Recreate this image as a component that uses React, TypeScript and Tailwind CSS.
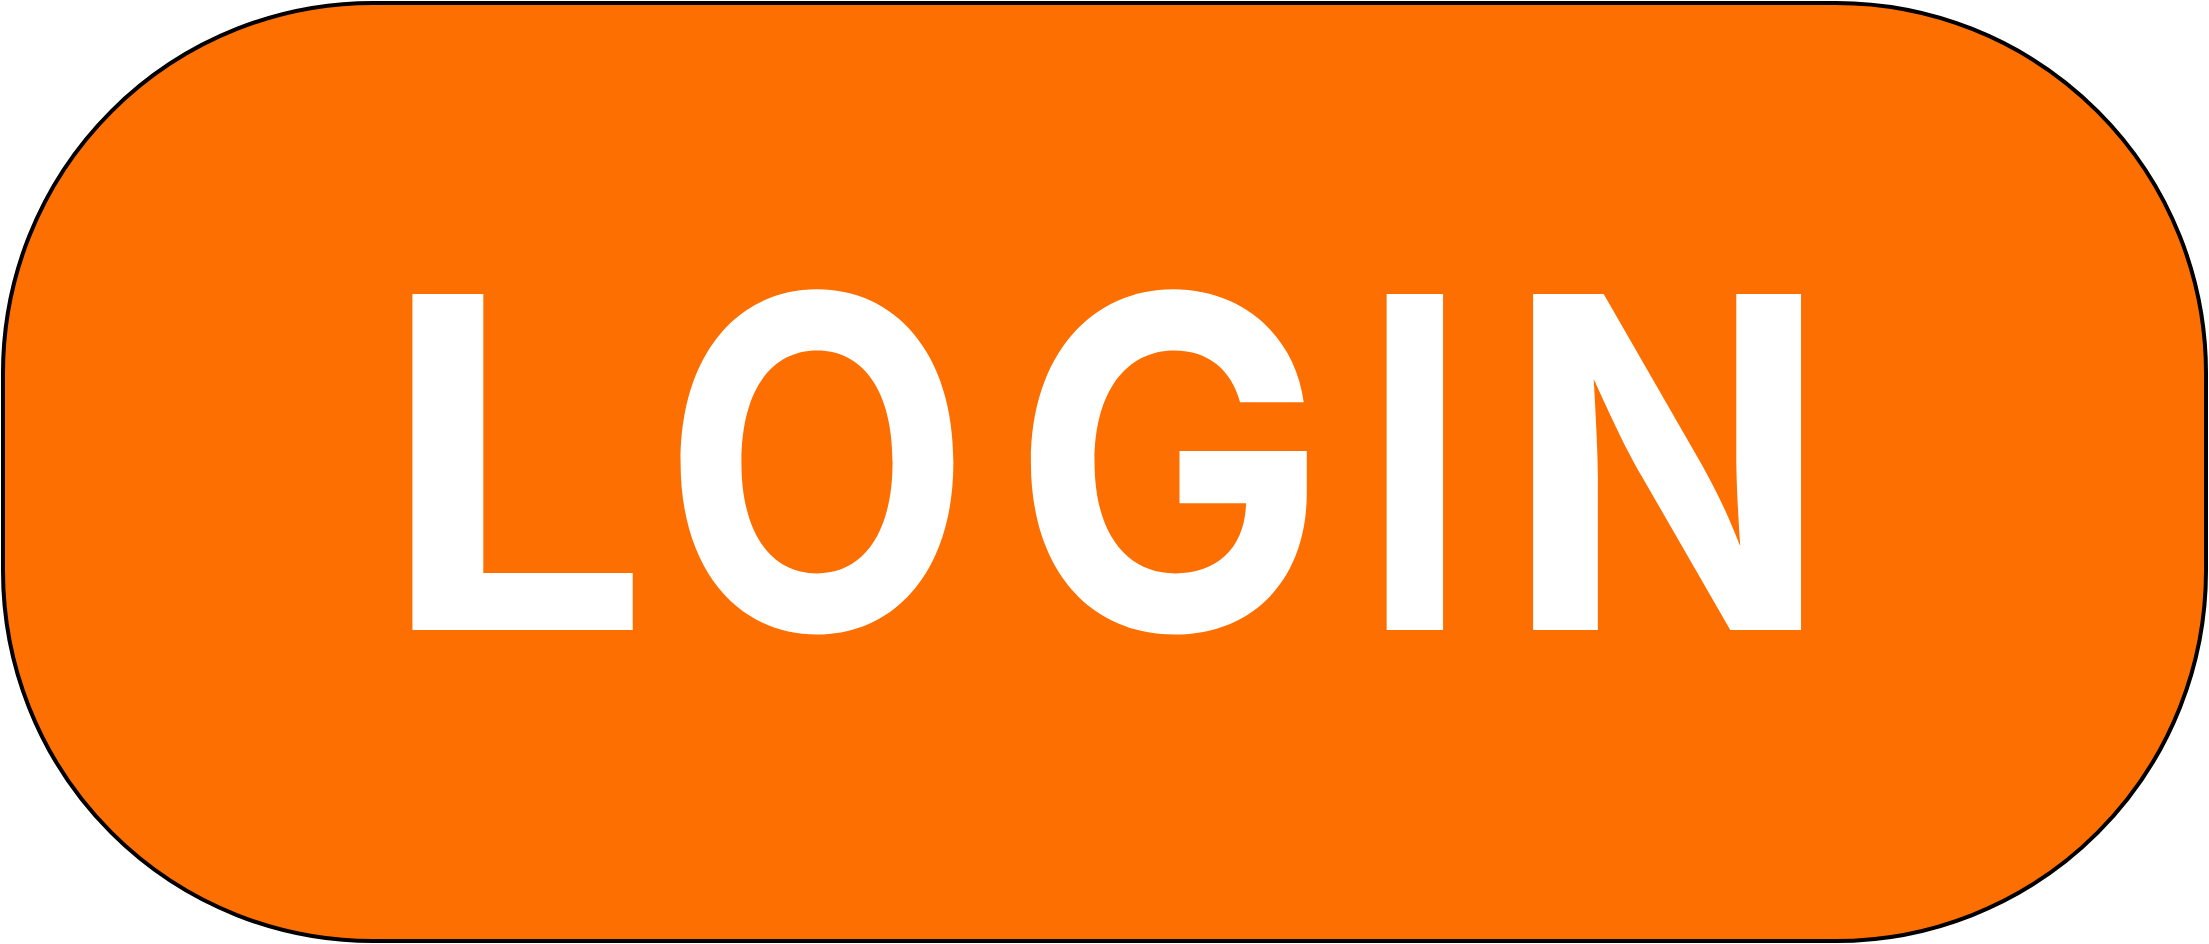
import React from "react";

const letters: { ch: string; w: string; ml: string; sx: string }[] = [
  { ch: "L", w: "w-[224px]", ml: "ml-0", sx: "scale-x-[1.03]" },
  { ch: "O", w: "w-[275px]", ml: "ml-[51px]", sx: "scale-x-[0.87]" },
  { ch: "G", w: "w-[267px]", ml: "ml-[82px]", sx: "scale-x-[0.91]" },
  { ch: "I", w: "w-[56px]", ml: "ml-[84px]", sx: "scale-x-[0.82]" },
  { ch: "N", w: "w-[264px]", ml: "ml-[92px]", sx: "scale-x-[0.92]" },
];

export default function App() {
  return (
    <div className="w-[2209px] h-[944px] bg-white p-[1px]">
      <button
        type="button"
        className="w-full h-full rounded-[372px] border-4 border-black bg-[#fd6f00] flex items-start justify-start pl-[399px] pt-[226px] cursor-pointer"
      >
        <div
          className="flex text-white font-bold text-[462px] leading-none"
          style={{ fontFamily: "Inter, 'Liberation Sans', sans-serif" }}
        >
          {letters.map((l) => (
            <span key={l.ch} className={`${l.w} ${l.ml} flex justify-center`}>
              <span className={`${l.sx} inline-block`}>{l.ch}</span>
            </span>
          ))}
        </div>
      </button>
    </div>
  );
}
